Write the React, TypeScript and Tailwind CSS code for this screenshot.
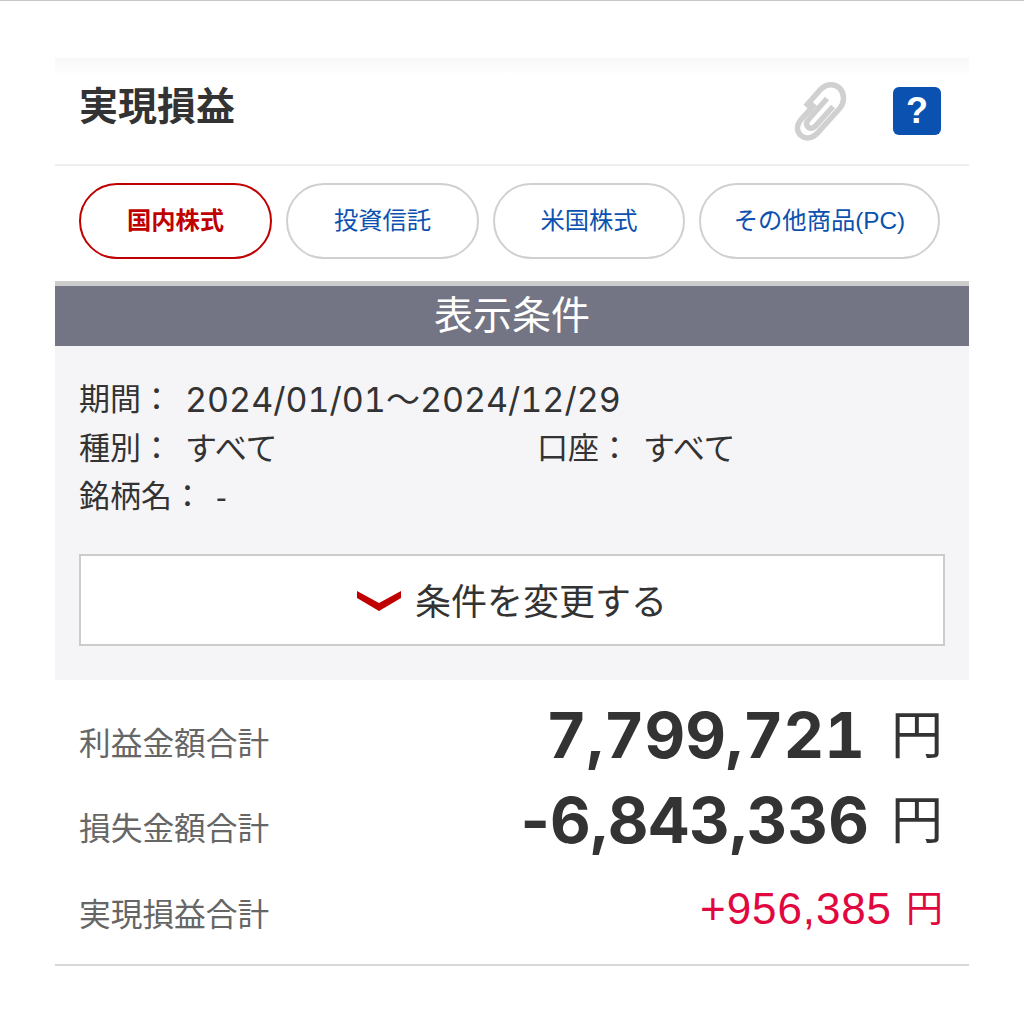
const font = { fontFamily: '"Liberation Sans", "Noto Sans CJK JP", sans-serif' };
const numberFont = { fontFamily: 'Inter, "Noto Sans CJK JP", sans-serif' };

const tabs = [
  { label: "国内株式", active: true, width: "w-[193px]" },
  { label: "投資信託", active: false, width: "w-[193px]" },
  { label: "米国株式", active: false, width: "w-[192px]" },
  { label: "その他商品(PC)", active: false, width: "w-[241px]" },
];

const PaperClip = () => (
  <svg width="54" height="60" viewBox="0 0 54 60" fill="none" stroke="#d0d0d0" strokeWidth="5.500" strokeLinecap="butt">
    <path d="M22 23 L8.500 38 C3 44.500 3.500 50.500 8 54.500 C12.500 58.500 19 57.500 24 52.500 L47 27 C52 21 51.500 12 46.500 7 C41 2 33 3 28 8 L12.500 25.500" />
    <path d="M34 17.500 L15.500 38.500 C13 41.500 13 44 15 46 C17 48 20 47.500 22.500 45 L40 25.500" />
  </svg>
);

const Chevron = () => (
  <svg className="mb-[4px]" width="44" height="20" viewBox="0 0 44 20" fill="#c00000">
    <path d="M0 0 L22 12 L44 0 L44 7 L22 20 L0 7 Z" />
  </svg>
);

function ConditionLabel({ label, value, isDate }: { label: string; value: string; isDate?: boolean }) {
  return (
    <div className="flex items-center text-[31px] leading-[48.500px] text-[#333333]">
      <span>{label}</span>
      {isDate ? (
        <span className="ml-[13px] text-[34px] tabular-nums" style={numberFont}>{value}</span>
      ) : (
        <span className="ml-[13px] text-[32px]">{value}</span>
      )}
    </div>
  );
}

function TotalRow({ label, value, large, minus, unitGap, height }: { label: string; value: string; large?: boolean; minus?: boolean; unitGap?: string; height: string }) {
  return (
    <div className={`flex items-center justify-between ${height}`}>
      <span className={`text-[31.700px] leading-none text-[#666666] ${large ? "pt-[18px]" : "pt-[30px]"}`}>{label}</span>
      {large ? (
        <span className="flex items-center text-[#333333]">
          <span className="text-[63px] leading-none font-bold" style={numberFont}>
            {minus && <span>-</span>}
            <span className="tabular-nums">{value}</span>
          </span>
          <span className={`${unitGap} text-[52px] leading-none`}>円</span>
        </span>
      ) : (
        <span className="flex items-center pt-[16px] text-[#e0083f]">
          <span className="text-[44px] leading-none tracking-[0.900px]">{value}</span>
          <span className="ml-[14px] text-[37px] leading-none">円</span>
        </span>
      )}
    </div>
  );
}

export default function App() {
  return (
    <div className="min-h-[1014px] border-t border-[#c8c8c8] bg-white pt-[57px]" style={font}>
      <div className="ml-[55px] w-[914px]">
        <div className="flex h-[108px] items-center justify-between border-b-2 border-[#eeeeee] bg-gradient-to-b from-[#f7f7f7] to-white to-[16%] pr-[28px] pl-[24px]">
          <h1 className="mb-[7px] text-[39px] font-bold text-[#333333]">実現損益</h1>
          <div className="flex items-center gap-[46px]">
            <PaperClip />
            <span className="flex h-[48px] w-[48px] items-center justify-center rounded-[6px] bg-[#0b51b0] text-[36px] font-bold text-white">?</span>
          </div>
        </div>

        <div className="flex h-[115px] gap-[14px] pt-[17px] pl-[24px]">
          {tabs.map((tab) => (
            <div
              key={tab.label}
              className={`flex h-[76px] ${tab.width} items-center justify-center rounded-[38px] border-[2.500px] text-[24.300px] ${
                tab.active ? "border-[#c00000] font-bold text-[#c00000]" : "border-[#d0d0d0] text-[#0b51b0]"
              }`}
            >
              {tab.label}
            </div>
          ))}
        </div>

        <div className="flex h-[65px] items-center justify-center border-t-[5px] border-[#cccccc] bg-[#737584] text-[39px] text-white">
          表示条件
        </div>

        <div className="h-[334px] bg-[#f5f5f7] px-[24px] pt-[30px]">
          <ConditionLabel label="期間：" value="2024/01/01～2024/12/29" isDate />
          <div className="flex">
            <div className="w-[458px]">
              <ConditionLabel label="種別：" value="すべて" />
            </div>
            <ConditionLabel label="口座：" value="すべて" />
          </div>
          <ConditionLabel label="銘柄名：" value="-" />
          <div className="mt-[32px] flex h-[92px] w-[866px] items-center justify-center gap-[14px] border-[2.500px] border-[#cccccc] bg-white pt-[7px] text-[36px] text-[#333333]">
            <Chevron />
            <span>条件を変更する</span>
          </div>
        </div>

        <div className="border-b-2 border-[#d8d8d8] pt-[13px] pr-[26px] pb-[25px] pl-[24px]">
          <TotalRow label="利益金額合計" value="7,799,721" large unitGap="ml-[26px]" height="h-[85px]" />
          <TotalRow label="損失金額合計" value="6,843,336" large minus unitGap="ml-[22px]" height="h-[85px]" />
          <TotalRow label="実現損益合計" value="+956,385" height="h-[76px]" />
        </div>
      </div>
    </div>
  );
}
